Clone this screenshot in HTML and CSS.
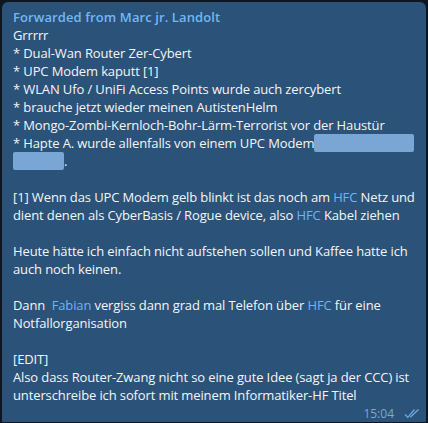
FILE: index.html
```html
<!DOCTYPE html>
<html>
<head>
<meta charset="utf-8">
<link rel="stylesheet" href="styles.css">
</head>
<body>
<div class="bubble">
  <div class="fwd">Forwarded from Marc jr. Landolt</div>
  <div class="text">Grrrrr<br>* Dual-Wan Router Zer-Cybert<br>* UPC Modem kaputt [1]<br>* WLAN Ufo / UniFi Access Points wurde auch zercybert<br>* brauche jetzt wieder meinen AutistenHelm<br>* Mongo-Zombi-Kernloch-Bohr-Lärm-Terrorist vor der Haustür<br>* Hapte A. wurde allenfalls von einem UPC Modem<span class="spoiler s1"></span><br><span class="spoiler s2"></span>.<br><br>[1] Wenn das UPC Modem gelb blinkt ist das noch am <span class="link">HFC</span> Netz und<br>dient denen als CyberBasis / Rogue device, also <span class="link">HFC</span> Kabel ziehen<br><br>Heute hätte ich einfach nicht aufstehen sollen und Kaffee hatte ich<br>auch noch keinen.<br><br>Dann &nbsp;<span class="link">Fabian</span> vergiss dann grad mal Telefon über <span class="link">HFC</span> für eine<br>Notfallorganisation<br><br>[EDIT]<br>Also dass Router-Zwang nicht so eine gute Idee (sagt ja der CCC) ist<br>unterschreibe ich sofort mit meinem Informatiker-HF Titel</div>
  <div class="meta">
    <span class="time">15:04</span>
    <svg class="checks" width="16" height="11" viewBox="0 0 16 11"><path d="M1 6.5 L3.8 9.3 L10.5 1.5 M6.3 9.3 L14.5 1.5" fill="none" stroke="#6aa9e6" stroke-width="1.3"/></svg>
  </div>
</div>
</body>
</html>
```
FILE: styles.css
```css
html, body {
  margin: 0;
  padding: 0;
  background: #0e1621;
  height: 423px;
  overflow: hidden;
}
.bubble {
  margin: 2px 2px 0 2px;
  background: #2b5278;
  border-radius: 6px 6px 0 0;
  padding: 6px 11px 0 11px;
  font-family: "Open Sans", sans-serif;
  font-size: 13px;
  line-height: 18px;
  color: #f3f6f9;
  letter-spacing: -0.12px;
}
.fwd {
  color: #71b8f5;
  font-weight: 600;
  letter-spacing: 0.1px;
}
.text {
  white-space: nowrap;
}
.link {
  color: #6fb5f3;
}
.spoiler {
  display: inline-block;
  vertical-align: top;
  height: 18px;
  background: #79a6d4;
  border-radius: 2px;
}
.s1 { width: 100px; }
.s2 { width: 51px; }
.meta {
  display: flex;
  justify-content: flex-end;
  align-items: center;
  gap: 10px;
  height: 17px;
  padding-top: 1px;
  margin-right: -5px;
  letter-spacing: 0;
}
.time {
  font-size: 12px;
  color: #7da8d3;
  line-height: 17px;
}
.checks {
  display: block;
}
```
